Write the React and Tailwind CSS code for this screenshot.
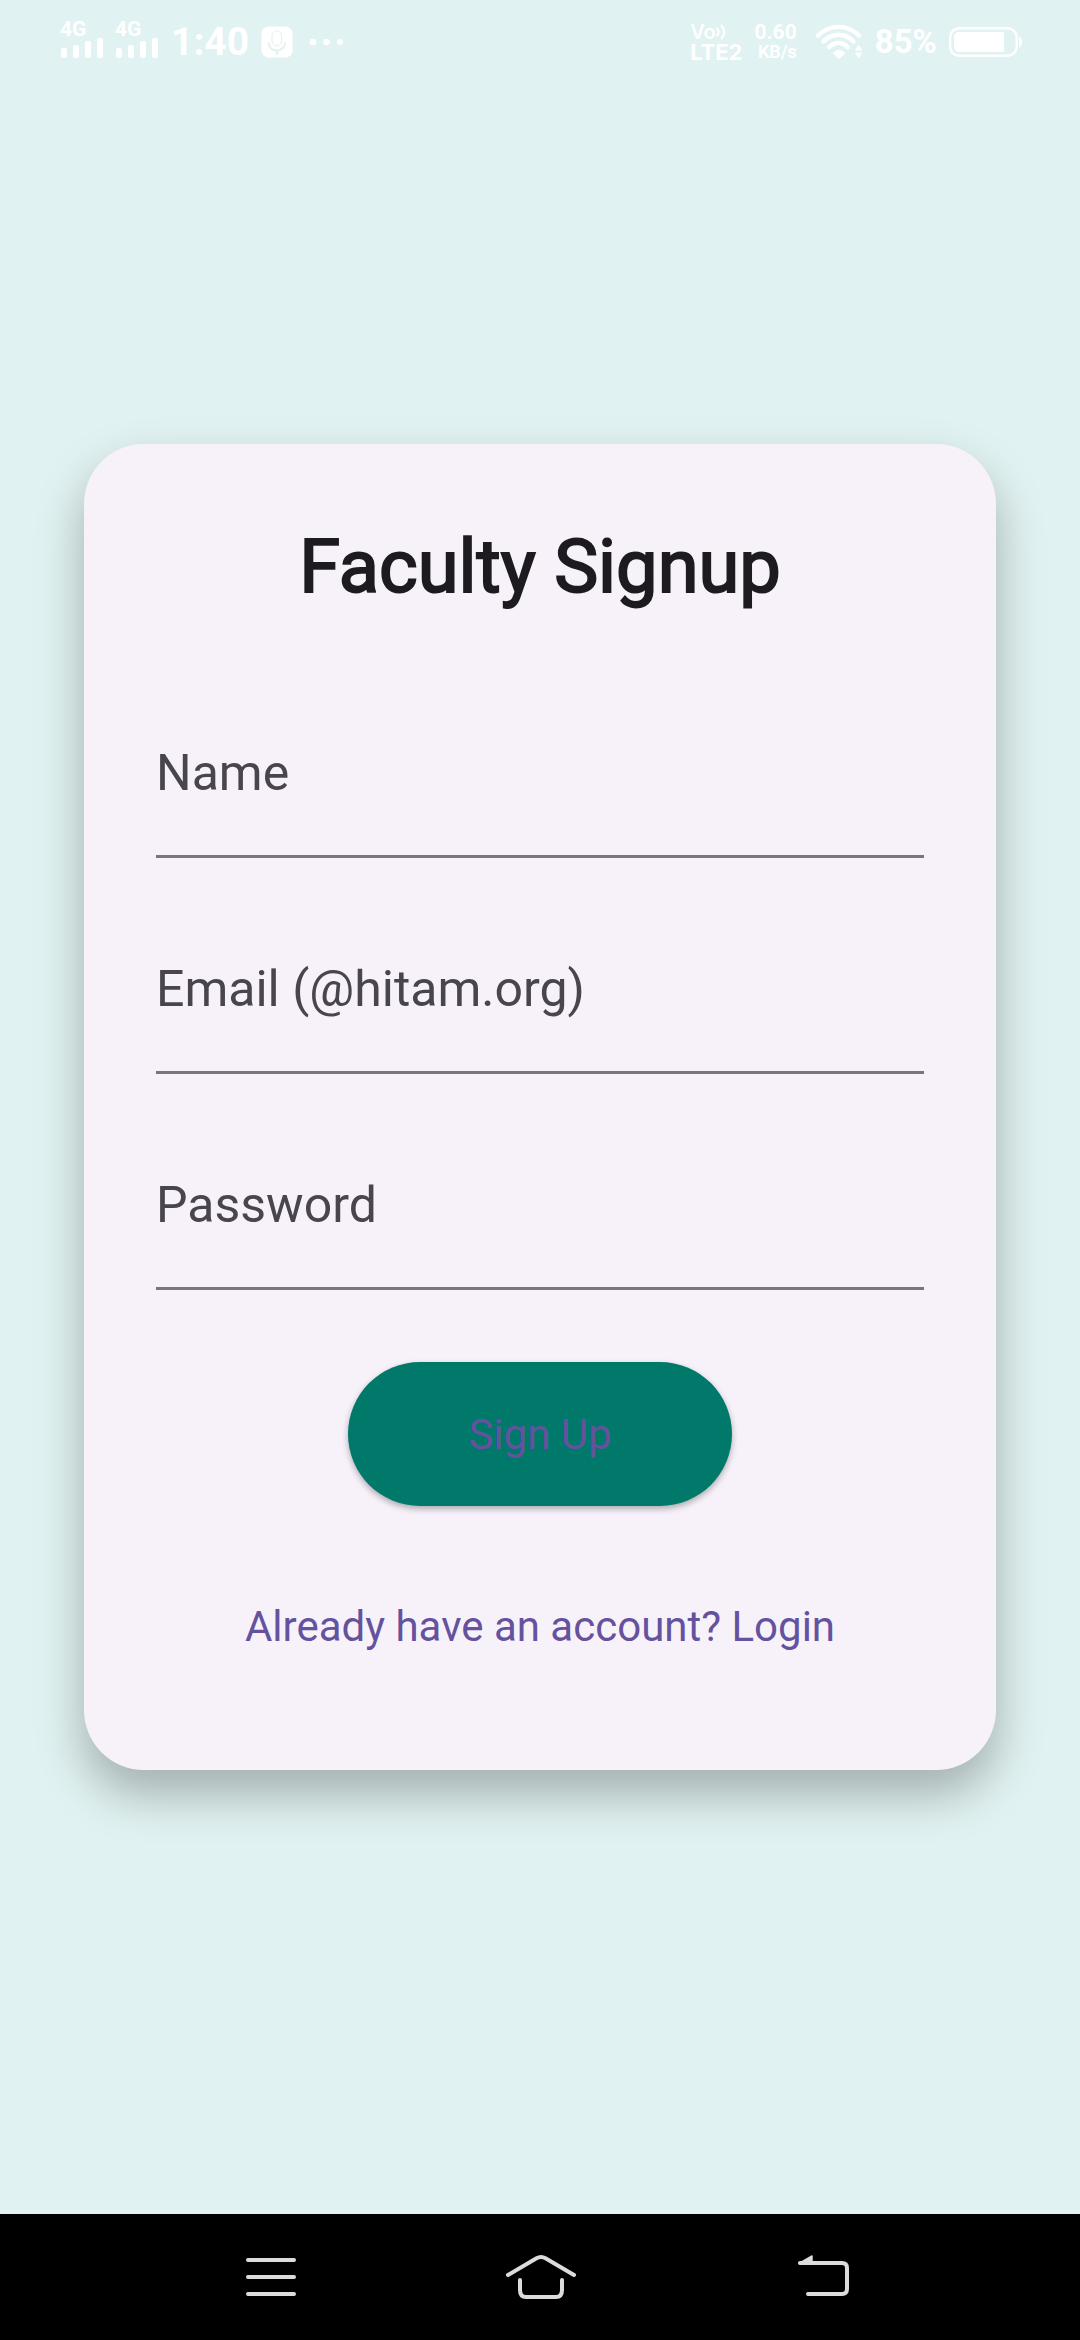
import React from "react";

function Signal() {
  return (
    <div className="flex flex-col">
      <span className="text-[21px] leading-[18px] font-bold">4G</span>
      <svg width="44" height="20" viewBox="0 0 44 20" fill="currentColor" aria-hidden="true">
        <rect x="1" y="10" width="6" height="10" rx="2" />
        <rect x="13" y="7" width="6" height="13" rx="2" />
        <rect x="25" y="3" width="6" height="17" rx="2" />
        <rect x="37" y="0" width="6" height="20" rx="2" />
      </svg>
    </div>
  );
}

function MicBadge() {
  return (
    <svg width="32" height="32" viewBox="0 0 32 32" aria-hidden="true">
      <rect width="31" height="31" x="0.5" y="0.5" rx="7" fill="currentColor" />
      <path
        d="M11 9.500a4.800 4.800 0 0 1 9.600 0V15a4.800 4.800 0 0 1-9.600 0Z"
        fill="none"
        stroke="#e0f2f1"
        strokeWidth="1"
      />
      <path d="M7.500 16.500a8.300 8 0 0 0 16.600 0M15.800 24.500V29" fill="none" stroke="#e0f2f1" strokeWidth="2" />
    </svg>
  );
}

function Dots() {
  return (
    <svg width="34" height="8" viewBox="0 0 34 8" fill="currentColor" aria-hidden="true">
      <circle cx="4" cy="4" r="3.3" />
      <circle cx="17.5" cy="4" r="3.3" />
      <circle cx="31" cy="4" r="3" />
    </svg>
  );
}

function Wifi() {
  return (
    <svg width="48" height="36" viewBox="0 0 48 36" aria-hidden="true">
      <g fill="none" stroke="currentColor" strokeWidth="4.4" strokeLinecap="round">
        <path d="M3 11.5C15 0 32 0 44 11.5" />
        <path d="M8.5 17.5C17.5 8.500 29.500 8.500 38.500 17.500" />
        <path d="M14 23.300C20 17.500 27 17.500 33 23.300" />
      </g>
      <path d="M18 29.500C20 24.800 28 24.800 30 29.500L25.500 34Q24 35.300 22.500 34Z" fill="currentColor" />
      <path d="M43.500 20.500l3.700 6h-7.400zM43.500 34.500l3.700-6h-7.400z" fill="currentColor" />
    </svg>
  );
}

function Battery() {
  return (
    <svg width="74" height="32" viewBox="0 0 74 32" aria-hidden="true">
      <rect x="1.200" y="2.200" width="66.500" height="27.600" rx="9" fill="none" stroke="currentColor" strokeWidth="2.400" />
      <path d="M10 6H55V26H10Q5 26 5 21V11Q5 6 10 6Z" fill="currentColor" />
      <path d="M70 10.500Q73 12 73 16T70 21.500Z" fill="currentColor" />
    </svg>
  );
}

function StatusBar() {
  return (
    <header className="flex h-[84px] items-center justify-between pr-[57px] pl-[60px] text-white">
      <div className="flex items-center">
        <div className="flex gap-[11px] pb-[6px]">
          <Signal />
          <Signal />
        </div>
        <span className="ml-[12px] text-[39px] leading-[44px] font-bold">1:40</span>
        <span className="ml-[12px] flex items-center gap-[16px]">
          <MicBadge />
          <Dots />
        </span>
      </div>
      <div className="flex items-center">
        <div className="flex flex-col">
          <span className="flex items-center font-[Inter] text-[20px] leading-[20px] font-semibold">
            Vo
            <svg width="10" height="16" viewBox="0 0 10 16" fill="none" stroke="currentColor" strokeWidth="2" strokeLinecap="round" aria-hidden="true">
              <path d="M1 4.500Q4 8 1 11.500M5.500 1.500Q11 8 5.500 14.500" />
            </svg>
          </span>
          <span className="font-[Inter] text-[22px] leading-[20px] font-bold">LTE2</span>
        </div>
        <div className="ml-[12px] flex flex-col items-end font-bold">
          <span className="text-[21px] leading-[20px]">0.60</span>
          <span className="text-[18px] leading-[20px]">KB/s</span>
        </div>
        <span className="ml-[18px]">
          <Wifi />
        </span>
        <span className="ml-[12px] text-[33px] leading-[36px] font-bold">85%</span>
        <span className="ml-[12px]">
          <Battery />
        </span>
      </div>
    </header>
  );
}

const fields = [
  { id: "name", label: "Name", type: "text" },
  { id: "email", label: "Email (@hitam.org)", type: "email" },
  { id: "password", label: "Password", type: "password" },
];

function Field({ id, label, type }) {
  return (
    <div className="grid h-[168px] items-center border-b-3 border-[#79747e]">
      <label htmlFor={id} className="col-start-1 row-start-1 text-[50px] leading-[72px] text-[#49454f]">
        {label}
      </label>
      <input
        id={id}
        type={type}
        className="col-start-1 row-start-1 h-full w-full bg-transparent text-[50px] text-[#1d1b20] outline-none"
      />
    </div>
  );
}

function NavBar() {
  return (
    <nav className="flex h-[126px] items-center justify-between bg-black pr-[231px] pl-[246px] text-[#dcdcdc]">
      <button type="button" aria-label="Recent apps">
        <svg className="block" width="50" height="44" viewBox="0 0 50 44" stroke="currentColor" strokeWidth="4" strokeLinecap="round">
          <path d="M2 5H48M2 22H48M2 39H48" />
        </svg>
      </button>
      <button type="button" aria-label="Home">
        <svg className="block" width="70" height="44" viewBox="0 0 70 44" fill="none" stroke="currentColor" strokeWidth="4" strokeLinecap="round">
          <path d="M2 20L30.500 3.300Q35 0.800 39.500 3.300L68 20" />
          <path d="M14 25V35Q14 42 20 42H50Q56 42 56 35V25" />
        </svg>
      </button>
      <button type="button" aria-label="Back">
        <svg className="block" width="63" height="44" viewBox="0 0 63 44" fill="none" stroke="currentColor" strokeWidth="4" strokeLinecap="round">
          <path d="M14 8H56Q61 8 61 13V34Q61 39 56 39H22" />
          <path d="M13 8.500L26 1V8.500Z" fill="currentColor" strokeWidth="1.500" strokeLinejoin="round" />
        </svg>
      </button>
    </nav>
  );
}

export default function App() {
  return (
    <div className="flex min-h-screen flex-col bg-[#e0f2f1] font-[Roboto,sans-serif]">
      <StatusBar />
      <main className="flex flex-1 flex-col justify-center px-[84px] pb-[84px]">
        <form
          className="flex flex-col items-center rounded-[60px] bg-[#f7f2fa] p-[72px] shadow-[0_24px_48px_rgba(0,0,0,0.28)]"
          onSubmit={(e) => e.preventDefault()}
        >
          <h1 className="text-[74px] leading-[102px] font-normal text-[#1d1b20] [-webkit-text-stroke:2px_#1d1b20]">
            Faculty Signup
          </h1>
          <div className="mt-[72px] flex w-full flex-col gap-[48px]">
            {fields.map((f) => (
              <Field key={f.id} {...f} />
            ))}
          </div>
          <button
            type="submit"
            className="mt-[72px] h-[144px] rounded-full bg-[#00796b] px-[120px] text-[42px] text-[#65529f] shadow-[0_3px_6px_rgba(0,0,0,0.3)]"
          >
            Sign Up
          </button>
          <a href="#login" className="mt-[48px] flex h-[144px] items-center text-[42px] text-[#65529f]">
            Already have an account? Login
          </a>
        </form>
      </main>
      <NavBar />
    </div>
  );
}
